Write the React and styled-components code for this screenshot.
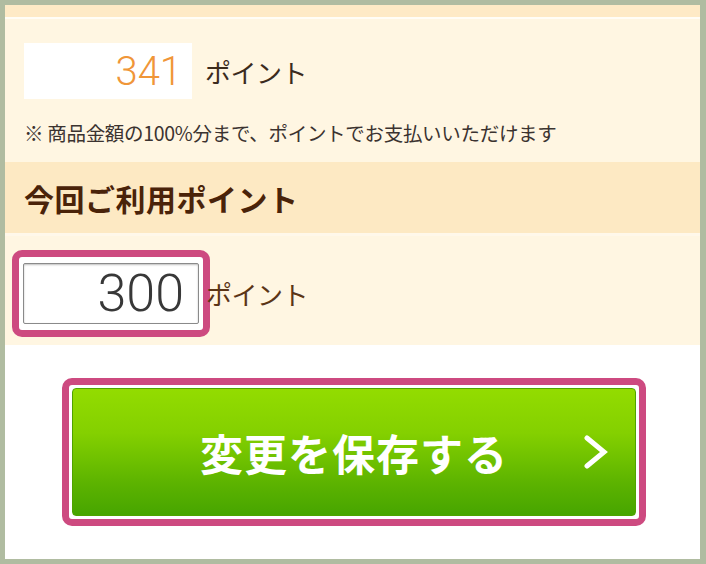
import styled, { createGlobalStyle } from "styled-components";

const GlobalStyle = createGlobalStyle`
    html, body {
        margin: 0;
        padding: 0;
        background: #b0bca1;
    }
    body {
        font-family: "Noto Sans CJK JP", "Noto Sans", sans-serif;
    }
    * {
        box-sizing: border-box;
    }
`;

const Frame = styled.div`
    width: 706px;
    height: 564px;
    padding: 5px 6px 5px 5px;
`;

const Panel = styled.div`
    height: 100%;
    background: #ffffff;
    display: flex;
    flex-direction: column;
`;

const TopStrip = styled.div`
    height: 14px;
    background: #feeac6;
    border-bottom: 2px solid #fffdf6;
`;

const Section = styled.div`
    background: #fff6e2;
    padding: ${props => props.$pad};
    display: flex;
    flex-direction: column;
`;

const Row = styled.div`
    display: flex;
    align-items: center;
    gap: ${props => props.$gap || "13px"};
`;

const PointBox = styled.div`
    width: 168px;
    height: 56px;
    background: #ffffff;
    display: flex;
    align-items: center;
    justify-content: flex-end;
    padding-right: 10px;
    font-family: Roboto, "Liberation Sans", sans-serif;
    font-weight: 300;
    font-size: 40px;
    color: #f09638;
`;

const Unit = styled.span`
    font-size: 26px;
    color: ${props => props.$color || "#3b2b1d"};
    letter-spacing: -0.5px;
    margin-left: ${props => props.$shift || "0px"};
`;

const Note = styled.p`
    margin: 19px 0 0;
    font-size: 19.5px;
    color: #3b3330;
    letter-spacing: -0.3px;
`;

const Header = styled.div`
    height: 74px;
    background: #fde9c3;
    display: flex;
    align-items: center;
    padding-left: 19px;
    border-bottom: 3px solid #fff8ea;
`;

const HeaderText = styled.h2`
    margin: 0;
    font-size: 30px;
    font-weight: 700;
    color: #4a2309;
    letter-spacing: 0.5px;
`;

const Highlight = styled.div`
    border: 7px solid #cd4a80;
    border-radius: 10px;
    background: #ffffff;
    padding: ${props => props.$pad};
`;

const NumberInput = styled.input`
    display: block;
    width: 176px;
    height: 61px;
    border: 1px solid #8a8a8a;
    border-radius: 2px;
    box-shadow: inset 0 1px 2px rgba(0, 0, 0, 0.25);
    background: #ffffff;
    text-align: right;
    padding: 0 14px 0 0;
    font-family: Roboto, "Liberation Sans", sans-serif;
    font-weight: 300;
    font-size: 52px;
    color: #383838;
    outline: none;
`;

const ButtonArea = styled.div`
    flex: 1;
    padding: 33px 54px 0 57px;
`;

const SaveButton = styled.button`
    width: 100%;
    height: 128px;
    border: 1px solid #4fa300;
    border-radius: 4px;
    background: linear-gradient(to bottom, #93dc00 0%, #84d000 35%, #5cb300 75%, #47a500 100%);
    display: flex;
    align-items: center;
    justify-content: center;
    position: relative;
    cursor: pointer;
    font-family: "Noto Sans CJK JP", sans-serif;
    font-size: 43px;
    font-weight: 700;
    color: #ffffff;
    letter-spacing: 1px;
`;

const Chevron = styled.svg`
    position: absolute;
    right: 26px;
    top: 50%;
    transform: translateY(-50%);
`;

export default function App() {
    return (
        <>
            <GlobalStyle />
            <Frame>
                <Panel>
                    <TopStrip />
                    <Section $pad="24px 19px 15px">
                        <Row>
                            <PointBox>341</PointBox>
                            <Unit>ポイント</Unit>
                        </Row>
                        <Note>※ 商品金額の100%分まで、ポイントでお支払いいただけます</Note>
                    </Section>
                    <Header>
                        <HeaderText>今回ご利用ポイント</HeaderText>
                    </Header>
                    <Section $pad="14px 7px 8px">
                        <Row $gap="0px">
                            <Highlight $pad="6px 4px">
                                <NumberInput type="text" value="300" readOnly />
                            </Highlight>
                            <Unit $color="#5b3516" $shift="-4px">ポイント</Unit>
                        </Row>
                    </Section>
                    <ButtonArea>
                        <Highlight $pad="3px">
                            <SaveButton>
                                変更を保存する
                                <Chevron width="26" height="34" viewBox="0 0 26 34">
                                    <polyline points="4,3 21,17 4,31" fill="none" stroke="#ffffff" strokeWidth="5" strokeLinejoin="miter" strokeLinecap="round" />
                                </Chevron>
                            </SaveButton>
                        </Highlight>
                    </ButtonArea>
                </Panel>
            </Frame>
        </>
    );
}
